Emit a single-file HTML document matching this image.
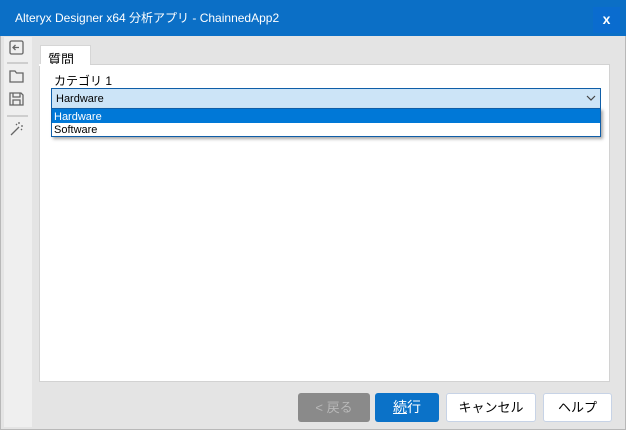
<!DOCTYPE html><html><head><style>
body{margin:0;width:626px;height:430px;overflow:hidden;background:#e4e4e4;font-family:"Liberation Sans","Noto Sans CJK JP",sans-serif;position:relative}
div{position:absolute;box-sizing:border-box}
.t{font-size:12px}
</style></head><body>
<div style="left:0;top:0;width:626px;height:430px;border:1px solid #b8b8b8"></div>
<div style="left:0;top:0;width:626px;height:36px;background:#0b6fc6;color:#fff;font-size:12px;line-height:36px;padding-left:15px">Alteryx Designer x64 分析アプリ - ChainnedApp2</div>
<div style="left:593px;top:7px;width:27px;height:26px;background:#0a6ccf;color:#fff;font-weight:bold;font-size:14px;text-align:center;line-height:24px">x</div>
<div style="left:4px;top:37px;width:28px;height:390px;background:#efefef"></div>
<svg style="position:absolute;left:0;top:36px" width="34" height="110" fill="none" stroke="#666" stroke-width="1.3">
<rect x="10" y="5" width="13" height="13" rx="1.5"/><path d="M19 11.5h-6M15.5 9l-2.5 2.5 2.5 2.5"/>
<line x1="7" y1="27" x2="28" y2="27" stroke="#bbb"/>
<path d="M10 35h5l1.5 2h6.5v9h-13z"/>
<path d="M10 57h11l2 2v10h-13z M13 57v4h7v-4 M13 69v-5h7v5"/>
<line x1="7" y1="80" x2="28" y2="80" stroke="#bbb"/>
<path d="M11 99l8-8 M19 86v2 M23 90h-2 M16 88l1 1 M22 94l-1-1"/>
</svg>
<div style="left:40px;top:45px;width:51px;height:21px;background:#fff;border:1px solid #d6d6d6;border-bottom:none;font-size:13px;padding:3px 0 0 7px">質問</div>
<div style="left:39px;top:64px;width:571px;height:318px;background:#fff;border:1px solid #d2d2d2"></div>
<div style="left:39px;top:64px;width:51px;height:2px;background:#fff"></div>
<div class="t" style="left:54px;top:72px;font-size:12px">カテゴリ 1</div>
<div class="t" style="left:51px;top:88px;width:550px;height:21px;background:#cce4f7;border:1px solid #0f5ea8;padding:4px 0 0 4px;font-size:11px">Hardware</div>
<svg style="position:absolute;left:586px;top:94px" width="10" height="8"><path d="M1 2l4 4 4-4" stroke="#444" fill="none" stroke-width="1.2"/></svg>
<div style="left:51px;top:108px;width:550px;height:29px;background:#fff;border:1px solid #0f5ea8;box-shadow:2px 2px 3px rgba(0,0,0,.35)"></div>
<div style="left:52px;top:109px;width:548px;height:14px;background:#0078d7;color:#fff;font-size:11px;padding:2px 0 0 2px">Hardware</div>
<div style="left:52px;top:123px;font-size:11px;padding:1px 0 0 2px">Software</div>
<div style="left:298px;top:393px;width:72px;height:29px;background:#8a8a8a;border-radius:3px;color:#b8b8b8;font-size:13px;text-align:center;line-height:29px">&lt; 戻る</div>
<div style="left:375px;top:393px;width:64px;height:29px;background:#0b72c8;border-radius:3px;color:#fff;font-size:14px;text-align:center;line-height:29px"><u>続</u>行</div>
<div style="left:446px;top:393px;width:90px;height:29px;background:#fff;border:1px solid #c7d3e6;border-radius:3px;font-size:13px;text-align:center;line-height:27px">キャンセル</div>
<div style="left:543px;top:393px;width:69px;height:29px;background:#fff;border:1px solid #c7d3e6;border-radius:3px;font-size:13px;text-align:center;line-height:27px">ヘルプ</div>
</body></html>
